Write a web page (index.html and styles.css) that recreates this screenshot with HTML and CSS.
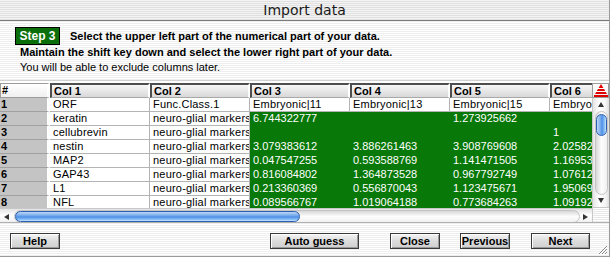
FILE: index.html
```html
<!DOCTYPE html>
<html>
<head>
<meta charset="utf-8">
<link rel="stylesheet" href="styles.css">
</head>
<body>
<div class="window">
  <div class="titlebar">Import data</div>
  <div class="instructions">
    <div class="line1"><span class="step">Step 3</span><span class="bold">Select the upper left part of the numerical part of your data.</span></div>
    <div class="line2 bold">Maintain the shift key down and select the lower right part of your data.</div>
    <div class="line3">You will be able to exclude columns later.</div>
  </div>
  <div class="table-area">
    <div class="table-main">
      <div class="hdr">
        <div class="hcell hnum">#</div>
        <div class="hcell">Col 1</div>
        <div class="hcell">Col 2</div>
        <div class="hcell">Col 3</div>
        <div class="hcell">Col 4</div>
        <div class="hcell">Col 5</div>
        <div class="hcell">Col 6</div>
      </div>
      <div class="tbody">
        <div class="row"><div class="rn">1</div><div class="c">ORF</div><div class="c">Func.Class.1</div><div class="c">Embryonic|11</div><div class="c">Embryonic|13</div><div class="c">Embryonic|15</div><div class="c">Embryonic|17</div></div>
        <div class="row"><div class="rn">2</div><div class="c">keratin</div><div class="c">neuro-glial markers</div><div class="c sel">6.744322777</div><div class="c sel"></div><div class="c sel">1.273925662</div><div class="c sel"></div></div>
        <div class="row"><div class="rn">3</div><div class="c">cellubrevin</div><div class="c">neuro-glial markers</div><div class="c sel"></div><div class="c sel"></div><div class="c sel"></div><div class="c sel">1</div></div>
        <div class="row"><div class="rn">4</div><div class="c">nestin</div><div class="c">neuro-glial markers</div><div class="c sel">3.079383612</div><div class="c sel">3.886261463</div><div class="c sel">3.908769608</div><div class="c sel">2.025821447</div></div>
        <div class="row"><div class="rn">5</div><div class="c">MAP2</div><div class="c">neuro-glial markers</div><div class="c sel">0.047547255</div><div class="c sel">0.593588769</div><div class="c sel">1.141471505</div><div class="c sel">1.169537220</div></div>
        <div class="row"><div class="rn">6</div><div class="c">GAP43</div><div class="c">neuro-glial markers</div><div class="c sel">0.816084802</div><div class="c sel">1.364873528</div><div class="c sel">0.967792749</div><div class="c sel">1.076125940</div></div>
        <div class="row"><div class="rn">7</div><div class="c">L1</div><div class="c">neuro-glial markers</div><div class="c sel">0.213360369</div><div class="c sel">0.556870043</div><div class="c sel">1.123475671</div><div class="c sel">1.950695300</div></div>
        <div class="row"><div class="rn">8</div><div class="c">NFL</div><div class="c">neuro-glial markers</div><div class="c sel">0.089566767</div><div class="c sel">1.019064188</div><div class="c sel">0.773684263</div><div class="c sel">1.091922700</div></div>
      </div>
      <div class="hscroll">
        <span class="arrow-left"></span>
        <div class="htrack"><div class="hthumb"></div></div>
        <span class="arrow-right"></span>
      </div>
    </div>
    <div class="vcol">
      <div class="colpick">
        <svg width="14" height="13" viewBox="0 0 14 13">
          <polygon points="7,0 13,10 1,10" fill="#e00000"/>
          <rect x="2" y="4" width="10" height="1" fill="#fff"/>
          <rect x="1" y="7" width="12" height="1" fill="#fff"/>
          <rect x="0" y="11" width="14" height="2" fill="#e00000"/>
        </svg>
      </div>
      <div class="vscroll">
        <span class="arrow-up"></span>
        <div class="vtrack"><div class="vthumb"></div></div>
        <span class="arrow-down"></span>
      </div>
      <div class="corner"></div>
    </div>
  </div>
  <div class="buttons">
    <div class="btn btn-help">Help</div>
    <div class="spacer"></div>
    <div class="btn btn-auto">Auto guess</div>
    <div class="btn btn-close">Close</div>
    <div class="btn btn-prev">Previous</div>
    <div class="btn btn-next">Next</div>
    <div class="grow">
      <svg width="12" height="12" viewBox="0 0 12 12">
        <path d="M11 3 L3 11 M11 6 L6 11 M11 9 L9 11" stroke="#888" stroke-width="1"/>
        <path d="M11 4 L4 11 M11 7 L7 11 M11 10 L10 11" stroke="#fff" stroke-width="1"/>
      </svg>
    </div>
  </div>
</div>
</body>
</html>
```
FILE: styles.css
```css
html, body {
  margin: 0;
  padding: 0;
}
body {
  width: 610px;
  height: 257px;
  overflow: hidden;
  font-family: "Liberation Sans", Arial, sans-serif;
  font-size: 11px;
  color: #000;
}
.window {
  width: 610px;
  height: 257px;
  box-sizing: border-box;
  border-right: 1px solid #9a9a9a;
  border-bottom: 1px solid #9a9a9a;
  display: flex;
  flex-direction: column;
  background: repeating-linear-gradient(to bottom, #ffffff 0, #ffffff 1px, #eeeeee 1px, #eeeeee 2px);
}
.titlebar {
  height: 21px;
  box-sizing: border-box;
  border-bottom: 1px solid #7c7c7c;
  background: repeating-linear-gradient(to bottom, #f4f4f4 0, #f4f4f4 1px, #e0e0e0 1px, #e0e0e0 2px);
  font-family: "DejaVu Sans", sans-serif;
  font-size: 14px;
  line-height: 20px;
  text-align: center;
  color: #1a1a1a;
}
.instructions {
  height: 59px;
  box-sizing: border-box;
  padding: 6px 0 0 20px;
}
.bold { font-weight: bold; }
.line1 {
  height: 18px;
  display: flex;
  align-items: center;
}
.step {
  display: inline-block;
  margin-left: -5px;
  width: 45px;
  height: 18px;
  box-sizing: border-box;
  border: 1px solid #000;
  background: #0a6e0a;
  color: #fff;
  font-weight: bold;
  font-size: 12px;
  line-height: 16px;
  text-align: center;
  margin-right: 10px;
}
.line2 {
  height: 14px;
  line-height: 14px;
  margin-top: 0;
}
.line3 {
  height: 14px;
  line-height: 14px;
  margin-top: 1px;
}
.table-area {
  display: flex;
  height: 142px;
  box-sizing: border-box;
  padding-top: 2px;
  border-top: 1px solid #d0d0d0;
  background: #fff;
}
.table-main {
  width: 593px;
  display: flex;
  flex-direction: column;
  overflow: hidden;
}
.hdr {
  display: flex;
  height: 15px;
  flex: none;
}
.hcell {
  flex: none;
  width: 100px;
  height: 15px;
  box-sizing: border-box;
  border-top: 2px solid #4e4e4e;
  border-left: 2px solid #4e4e4e;
  border-right: 2px solid #ffffff;
  border-bottom: 1px solid #a8a8a8;
  background: linear-gradient(to bottom, #f8f8f8, #e4e4e4 60%, #d8d8d8);
  font-weight: bold;
  line-height: 12px;
  padding-left: 2px;
}
.hcell.hnum {
  width: 50px;
  border: 1px solid #9c9c9c;
  border-right: 3px solid #fff;
  background: linear-gradient(to bottom, #ffffff, #f0f0f0);
  line-height: 13px;
  padding-left: 1px;
}
.tbody {
  height: 110px;
  flex: none;
  overflow: hidden;
}
.row {
  display: flex;
  height: 14px;
}
.rn {
  flex: none;
  width: 50px;
  box-sizing: border-box;
  background: #c4c4c4;
  border-right: 3px solid #ffffff;
  border-bottom: 1px solid #a0a0a0;
  font-weight: bold;
  line-height: 13px;
  padding-left: 1px;
}
.c {
  flex: none;
  width: 100px;
  box-sizing: border-box;
  border-right: 1px solid #b4b4b4;
  border-bottom: 1px solid #b4b4b4;
  padding-left: 3px;
  line-height: 13px;
  white-space: nowrap;
  overflow: hidden;
  letter-spacing: 0.2px;
}
.c.sel {
  background: #087808;
  color: #fff;
  border-color: #087808;
  letter-spacing: 0;
}
.hscroll {
  height: 15px;
  flex: none;
  display: flex;
  align-items: center;
  border-top: 1px solid #c8c8c8;
  background: linear-gradient(to bottom, #e4e4e4, #ffffff 40%, #f4f4f4 80%, #dedede);
}
.arrow-left {
  width: 0; height: 0;
  margin: 0 5px 0 4px;
  border-top: 3px solid transparent;
  border-bottom: 3px solid transparent;
  border-right: 5px solid #333;
}
.arrow-right {
  width: 0; height: 0;
  margin: 0 4px 0 3px;
  border-top: 3px solid transparent;
  border-bottom: 3px solid transparent;
  border-left: 5px solid #333;
}
.htrack {
  flex: 1;
  height: 13px;
  border-radius: 7px;
  box-sizing: border-box;
  border: 1px solid #c4c4c4;
  background: linear-gradient(to bottom, #d8d8d8, #fdfdfd 50%, #f0f0f0);
  display: flex;
}
.hthumb {
  width: 285px;
  height: 11px;
  border-radius: 6px;
  box-sizing: border-box;
  border: 1px solid #2d5fb0;
  background: linear-gradient(to bottom, #bcd6f6, #7fb0ee 35%, #4e8fe6 55%, #8ec3f7 85%, #c8e4fb);
}
.vcol {
  width: 17px;
  flex: none;
  display: flex;
  flex-direction: column;
  background: #fff;
}
.colpick {
  height: 15px;
  display: flex;
  justify-content: center;
  align-items: center;
  box-sizing: border-box;
  border: 1px solid #9c9c9c;
  background: linear-gradient(to bottom, #ffffff, #ececec);
}
.vscroll {
  height: 110px;
  display: flex;
  flex-direction: column;
  align-items: center;
  border-left: 1px solid #c8c8c8;
  background: linear-gradient(to right, #e4e4e4, #ffffff 40%, #f4f4f4 80%, #dedede);
}
.arrow-up {
  width: 0; height: 0;
  margin-top: 4px;
  margin-bottom: 4px;
  border-left: 3px solid transparent;
  border-right: 3px solid transparent;
  border-bottom: 5px solid #333;
}
.arrow-down {
  width: 0; height: 0;
  margin-top: 3px;
  margin-bottom: 4px;
  border-left: 3px solid transparent;
  border-right: 3px solid transparent;
  border-top: 5px solid #333;
}
.vtrack {
  flex: 1;
  width: 13px;
  border-radius: 7px;
  box-sizing: border-box;
  border: 1px solid #c4c4c4;
  background: linear-gradient(to right, #d8d8d8, #fdfdfd 50%, #f0f0f0);
}
.vthumb {
  width: 11px;
  height: 22px;
  margin-top: 2px;
  border-radius: 6px;
  box-sizing: border-box;
  border: 1px solid #2d5fb0;
  background: linear-gradient(to right, #bcd6f6, #7fb0ee 35%, #4e8fe6 55%, #8ec3f7 85%, #c8e4fb);
}
.corner {
  height: 15px;
  box-sizing: border-box;
  border-top: 1px solid #c8c8c8;
  border-left: 1px solid #c8c8c8;
  background: repeating-linear-gradient(to bottom, #ffffff 0, #ffffff 1px, #e8e8e8 1px, #e8e8e8 2px);
}
.buttons {
  flex: 1;
  display: flex;
  align-items: flex-start;
  padding: 10px 0 0 10px;
  position: relative;
  border-top: 1px solid #b0b0b0;
}
.spacer { flex: 1; }
.btn {
  height: 16px;
  box-sizing: border-box;
  border: 1px solid #3a3a3a;
  box-shadow: inset 1px 1px 0 #ffffff, inset -1px -1px 0 #9a9a9a;
  background: linear-gradient(to bottom, #f4f4f4, #dcdcdc 50%, #cfcfcf);
  font-weight: bold;
  font-size: 11px;
  line-height: 14px;
  text-align: center;
}
.btn-help { width: 50px; }
.btn-auto { width: 89px; margin-right: 31px; }
.btn-close { width: 50px; margin-right: 20px; }
.btn-prev { width: 50px; margin-right: 21px; }
.btn-next { width: 59px; margin-right: 19px; }
.grow {
  position: absolute;
  right: 1px;
  bottom: 1px;
  width: 12px;
  height: 12px;
}
```
